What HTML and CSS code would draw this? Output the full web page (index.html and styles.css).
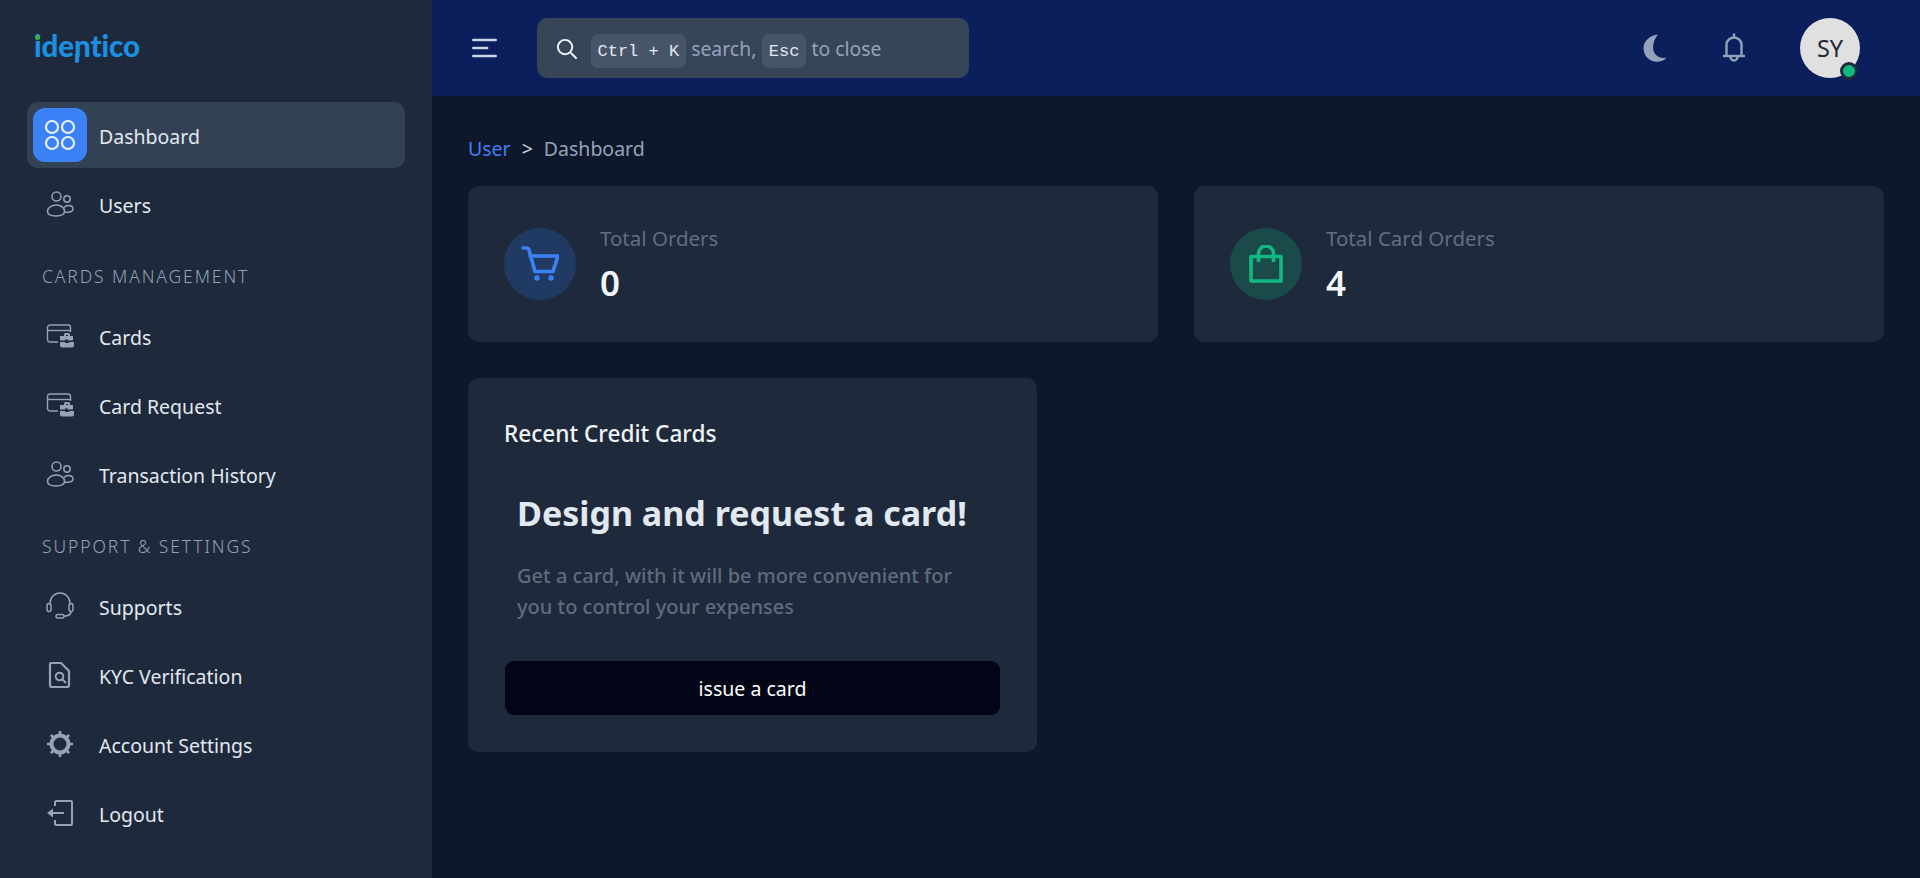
FILE: index.html
```html
<!DOCTYPE html>
<html lang="en">
<head>
<meta charset="utf-8">
<title>Dashboard</title>
<link rel="stylesheet" href="styles.css">
</head>
<body>
<div class="app">
  <aside class="sidebar">
    <div class="brand"><span class="logo">identico<i class="logo-dot"></i><i class="logo-stem"></i></span></div>
    <nav class="nav">
      <a class="item active"><span class="ico-box"><svg viewBox="0 0 32 32" width="32" height="32" fill="none" stroke="#e8f0ff" stroke-width="2.200"><circle cx="8" cy="8" r="6"/><circle cx="24" cy="8" r="6"/><circle cx="8" cy="24" r="6"/><circle cx="24" cy="24" r="6"/></svg></span><span>Dashboard</span></a>
      <a class="item"><span class="ico"><svg viewBox="0 0 28 28" width="28" height="28" fill="none" stroke="#94a3b8" stroke-width="1.500"><circle cx="10.500" cy="6.500" r="4.500"/><circle cx="21" cy="9" r="3.200"/><path d="M10.500 15c-5 0-9 2.800-9 6.300 0 3.200 4 4.700 8.500 4.700 4.800 0 8.500-1.600 8.500-4.700 0-3.500-3.500-6.300-8-6.300Z"/><path d="M18 17.500c1.200-1.300 3-2 4.500-2 2.500 0 4.500 1.500 4.500 3.700 0 2.300-3.200 3.300-8.500 3.100"/></svg></span><span>Users</span></a>
      <div class="section">CARDS MANAGEMENT</div>
      <a class="item"><span class="ico"><svg viewBox="0 0 28 28" width="28" height="28" fill="none" stroke="#94a3b8" stroke-width="1.400"><path d="M12 20H4a2.500 2.500 0 0 1-2.500-2.500v-12A2.500 2.500 0 0 1 4 3h18a2.500 2.500 0 0 1 2.500 2.500V10"/><path d="M1.500 8.500h23"/><path fill="#94a3b8" stroke="none" d="M15 14h3v-1.500a1.500 1.500 0 0 1 1.500-1.500h3a1.500 1.500 0 0 1 1.500 1.500V14h3v4.500h-5v-1h-3v1h-5V14Zm5 0h2v-1h-2ZM14 20h5v1h4v-1h5v3.500a2 2 0 0 1-2 2H16a2 2 0 0 1-2-2Z"/></svg></span><span>Cards</span></a>
      <a class="item"><span class="ico"><svg viewBox="0 0 28 28" width="28" height="28" fill="none" stroke="#94a3b8" stroke-width="1.400"><path d="M12 20H4a2.500 2.500 0 0 1-2.500-2.500v-12A2.500 2.500 0 0 1 4 3h18a2.500 2.500 0 0 1 2.500 2.500V10"/><path d="M1.500 8.500h23"/><path fill="#94a3b8" stroke="none" d="M15 14h3v-1.500a1.500 1.500 0 0 1 1.500-1.500h3a1.500 1.500 0 0 1 1.500 1.500V14h3v4.500h-5v-1h-3v1h-5V14Zm5 0h2v-1h-2ZM14 20h5v1h4v-1h5v3.500a2 2 0 0 1-2 2H16a2 2 0 0 1-2-2Z"/></svg></span><span>Card Request</span></a>
      <a class="item"><span class="ico"><svg viewBox="0 0 28 28" width="28" height="28" fill="none" stroke="#94a3b8" stroke-width="1.500"><circle cx="10.500" cy="6.500" r="4.500"/><circle cx="21" cy="9" r="3.200"/><path d="M10.500 15c-5 0-9 2.800-9 6.300 0 3.200 4 4.700 8.500 4.700 4.800 0 8.500-1.600 8.500-4.700 0-3.500-3.500-6.300-8-6.300Z"/><path d="M18 17.500c1.200-1.300 3-2 4.500-2 2.500 0 4.500 1.500 4.500 3.700 0 2.300-3.200 3.300-8.500 3.100"/></svg></span><span>Transaction History</span></a>
      <div class="section">SUPPORT &amp; SETTINGS</div>
      <a class="item"><span class="ico"><svg viewBox="0 0 28 28" width="28" height="28" fill="none" stroke="#94a3b8" stroke-width="1.500"><path d="M4 13V11a10 10 0 0 1 20 0v2"/><rect x="1" y="11.500" width="4" height="8" rx="2"/><rect x="23" y="11.500" width="4" height="8" rx="2"/><path d="M25 19.500c0 3-3 4.500-7 4.700"/><rect x="10" y="22.500" width="8" height="3.500" rx="1.750"/></svg></span><span>Supports</span></a>
      <a class="item"><span class="ico"><svg viewBox="0 0 28 28" width="28" height="28" fill="none" stroke="#94a3b8" stroke-width="2.200"><path d="M5 2h10l8 8v14a2 2 0 0 1-2 2H6a2 2 0 0 1-2-2V3a1 1 0 0 1 1-1Z" stroke-linejoin="round"/><circle cx="13.500" cy="15.500" r="3.800" stroke-width="2"/><path d="m16.500 18.500 3.500 3.500" stroke-width="2"/></svg></span><span>KYC Verification</span></a>
      <a class="item"><span class="ico"><svg viewBox="0 0 28 28" width="28" height="28" fill="none" stroke="#94a3b8"><circle cx="14" cy="14" r="8.500" stroke-width="4"/><path stroke-width="2.600" d="M14 1v3M14 24v3M1 14h3M24 14h3M4.800 4.800l2.200 2.200M21 21l2.200 2.200M4.800 23.200 7 21M21 7l2.200-2.200"/></svg></span><span>Account Settings</span></a>
      <a class="item"><span class="ico"><svg viewBox="0 0 28 28" width="28" height="28" fill="none" stroke="#94a3b8" stroke-width="2"><path d="M9 7V3.500A1.500 1.500 0 0 1 10.500 2H25a1 1 0 0 1 1 1v22a1 1 0 0 1-1 1H10.500A1.500 1.500 0 0 1 9 24.500V21"/><path d="M18 14H5"/><path fill="#94a3b8" stroke="none" d="M7 9.500v9L1 14Z"/></svg></span><span>Logout</span></a>
    </nav>
  </aside>
  <div class="main">
    <header class="topbar">
      <button class="burger"><svg viewBox="0 0 25 20" width="25" height="20" fill="none" stroke="#cbd5e1" stroke-width="2.400" stroke-linecap="round"><path d="M1.200 2h22.600M1.200 10h14M1.200 18h22.600"/></svg></button>
      <div class="search">
        <svg class="search-ico" viewBox="0 0 22 22" width="21" height="21" fill="none" stroke="#f1f5f9" stroke-width="2" stroke-linecap="round"><circle cx="9.500" cy="9.500" r="7.500"/><path d="m15 15 6 6"/></svg>
        <kbd class="key">Ctrl + K</kbd><span class="hint">search,</span><kbd class="key">Esc</kbd><span class="hint">to close</span>
      </div>
      <div class="actions">
        <svg class="moon" viewBox="0 0 24 28" width="24" height="28"><path fill="#94a3b8" d="M15 .5C7 1.500 .5 6.800.5 14.300c0 7.700 6.300 13.500 13.500 13.500 3.800 0 7.300-1.500 9.500-4-8.300 1-13.400-3.700-13.400-10.300C10.100 8.500 12 4 15 .5Z"/></svg>
        <svg class="bell" viewBox="0 0 24 30" width="24" height="30" fill="none" stroke="#94a3b8" stroke-width="2.400"><path d="M1 23h22"/><path d="M4.500 23V12a7.500 7.500 0 0 1 15 0v11"/><path d="M12 4.500V.5"/><path d="M8.500 24a3.500 3.500 0 0 0 7 0"/></svg>
        <div class="avatar">SY<span class="status"></span></div>
      </div>
    </header>
    <main class="content">
      <div class="crumbs"><span class="crumb-user">User</span><span class="crumb-sep">&gt;</span><span class="crumb-page">Dashboard</span></div>
      <section class="grid">
        <div class="stat">
          <span class="bubble blue"><svg viewBox="0 0 38 36" width="38" height="36" fill="none" stroke="#3b82f6" stroke-width="3.600" stroke-linejoin="round" stroke-linecap="round"><path d="M2 2h3.500c1.200 0 2 .6 2.400 1.800L14 25.500h18L37 10H9"/><circle cx="16" cy="32" r="2" fill="#3b82f6" stroke-width="1.500"/><circle cx="30" cy="32" r="2" fill="#3b82f6" stroke-width="1.500"/></svg></span>
          <div class="stat-text"><div class="stat-label">Total Orders</div><div class="stat-value">0</div></div>
        </div>
        <div class="stat">
          <span class="bubble green"><svg viewBox="0 0 34 38" width="34" height="38" fill="none" stroke="#10b981" stroke-width="3.600" stroke-linejoin="round"><path d="M2 11.500h30V36H2Z"/><path d="M9.500 17V8.500a7.500 7.500 0 0 1 15 0V17"/></svg></span>
          <div class="stat-text"><div class="stat-label">Total Card Orders</div><div class="stat-value">4</div></div>
        </div>
        <div class="recent">
          <h3 class="recent-title">Recent Credit Cards</h3>
          <div class="promo">
            <h2 class="promo-title">Design and request a card!</h2>
            <p class="promo-text">Get a card, with it will be more convenient for you to control your expenses</p>
          </div>
          <button class="cta">issue a card</button>
        </div>
      </section>
    </main>
  </div>
</div>
</body>
</html>
```
FILE: styles.css
```css
* { box-sizing: border-box; }
html, body { margin: 0; height: 100%; }
body { font-family: "Noto Sans", "Open Sans", sans-serif; font-size: 18px; background: #0f172a; color: #e2e8f0; overflow: hidden; }
.app { display: flex; height: 878px; }
.sidebar { width: 432px; flex: none; background: #1e293b; padding: 0 27px; }
.brand { height: 102px; padding: 28px 7px 0; }
.logo { position: relative; display: inline-block; font-family: "Lato", sans-serif; font-weight: 900; font-size: 29.500px; line-height: 36px; color: #1b8fe0; letter-spacing: -.1px; }
.logo-dot { position: absolute; left: 1px; top: 7px; width: 5px; height: 5px; border-radius: 50%; background: #2fb344; }
.logo-stem { position: absolute; left: 41px; top: 26px; width: 4px; height: 9px; background: #1b8fe0; border-radius: 0 0 2px 2px; }
.nav { display: flex; flex-direction: column; gap: 3px; }
.item { display: flex; align-items: center; gap: 12px; height: 66px; padding: 0 6px; border-radius: 11px; color: #e2e8f0; font-size: 19.500px; }
.item span:last-child { position: relative; top: 1px; }
.item.active { background: #334155; }
.ico-box { width: 54px; height: 54px; flex: none; border-radius: 12px; background: #3b82f6; display: flex; align-items: center; justify-content: center; }
.ico { width: 54px; height: 54px; flex: none; display: flex; align-items: center; justify-content: center; }
.section { height: 60px; padding: 25px 15px 0; font-size: 17.500px; line-height: 22px; letter-spacing: 1.900px; color: #94a3b8; white-space: nowrap; font-weight: 300; }
.main { flex: 1; min-width: 0; display: flex; flex-direction: column; }
.topbar { height: 96px; flex: none; background: #0a1f5c; display: flex; align-items: center; padding: 0 60px 0 40px; }
.burger { background: none; border: 0; padding: 0; display: flex; margin-right: 40px; }
.search { width: 432px; height: 60px; background: #374559; border-radius: 10px; display: flex; align-items: center; padding-left: 19px; color: #94a3b8; font-size: 19.400px; }
.search-ico { margin-right: 14px; }
.key { font-family: "Liberation Mono", monospace; font-size: 17px; line-height: 32px; height: 34px; margin-top: 6px; padding: 2px 6.500px 0; background: #475569; border-radius: 7px; color: #e2e8f0; }
.hint { margin: 0 6px 0 5.500px; }
.actions { margin-left: auto; display: flex; align-items: center; }
.moon { margin-right: 55px; }
.bell { margin-right: 54px; }
.avatar { position: relative; width: 60px; height: 60px; border-radius: 50%; background: #e0e0e0; color: #1f2937; display: flex; align-items: center; justify-content: center; font-size: 23.500px; }
.status { position: absolute; right: 2px; bottom: -2px; width: 18px; height: 18px; border-radius: 50%; background: #10b981; border: 3px solid #1e293b; }
.content { padding: 36px 36px 0; }
.crumbs { display: flex; align-items: center; gap: 11px; height: 32px; font-size: 19.500px; }
.crumb-user { color: #3b82f6; }
.crumb-sep { color: #cbd5e1; }
.crumb-page { color: #94a3b8; }
.grid { margin-top: 22px; display: grid; grid-template-columns: repeat(12, 1fr); gap: 36px; align-items: start; }
.stat { grid-column: span 6; height: 156px; background: #1e293b; border-radius: 10px; display: flex; align-items: center; padding: 0 36px; gap: 24px; }
.bubble { width: 72px; height: 72px; flex: none; border-radius: 50%; display: flex; align-items: center; justify-content: center; }
.bubble.blue { background: #213a63; }
.bubble.green { background: #1b4a4b; }
.stat-text { padding-top: 3px; }
.stat-label { color: #5f6f86; font-size: 20.500px; line-height: 26px; }
.stat-value { color: #f1f5f9; font-size: 35px; line-height: 46px; font-weight: 600; margin-top: 9px; }
.recent { grid-column: span 5; height: 374px; background: #1e293b; border-radius: 10px; padding: 36px 37px 37px; display: flex; flex-direction: column; }
.recent-title { margin: 6px 0 0 -1px; font-size: 22.600px; line-height: 28px; font-weight: 500; color: #f1f5f9; }
.promo { padding: 0 12px; flex: 1; }
.promo-title { margin: 42px 0 0; font-size: 34px; line-height: 46px; font-weight: 700; color: #e2e8f0; white-space: nowrap; }
.promo-text { margin: 25px 0 0; padding-right: 20px; font-size: 20px; line-height: 30.600px; color: #5f6b7e; font-weight: 500; }
.cta { height: 54px; width: 100%; flex: none; background: #020617; color: #fff; border: 0; border-radius: 9px; font: inherit; font-size: 19.500px; }
```
